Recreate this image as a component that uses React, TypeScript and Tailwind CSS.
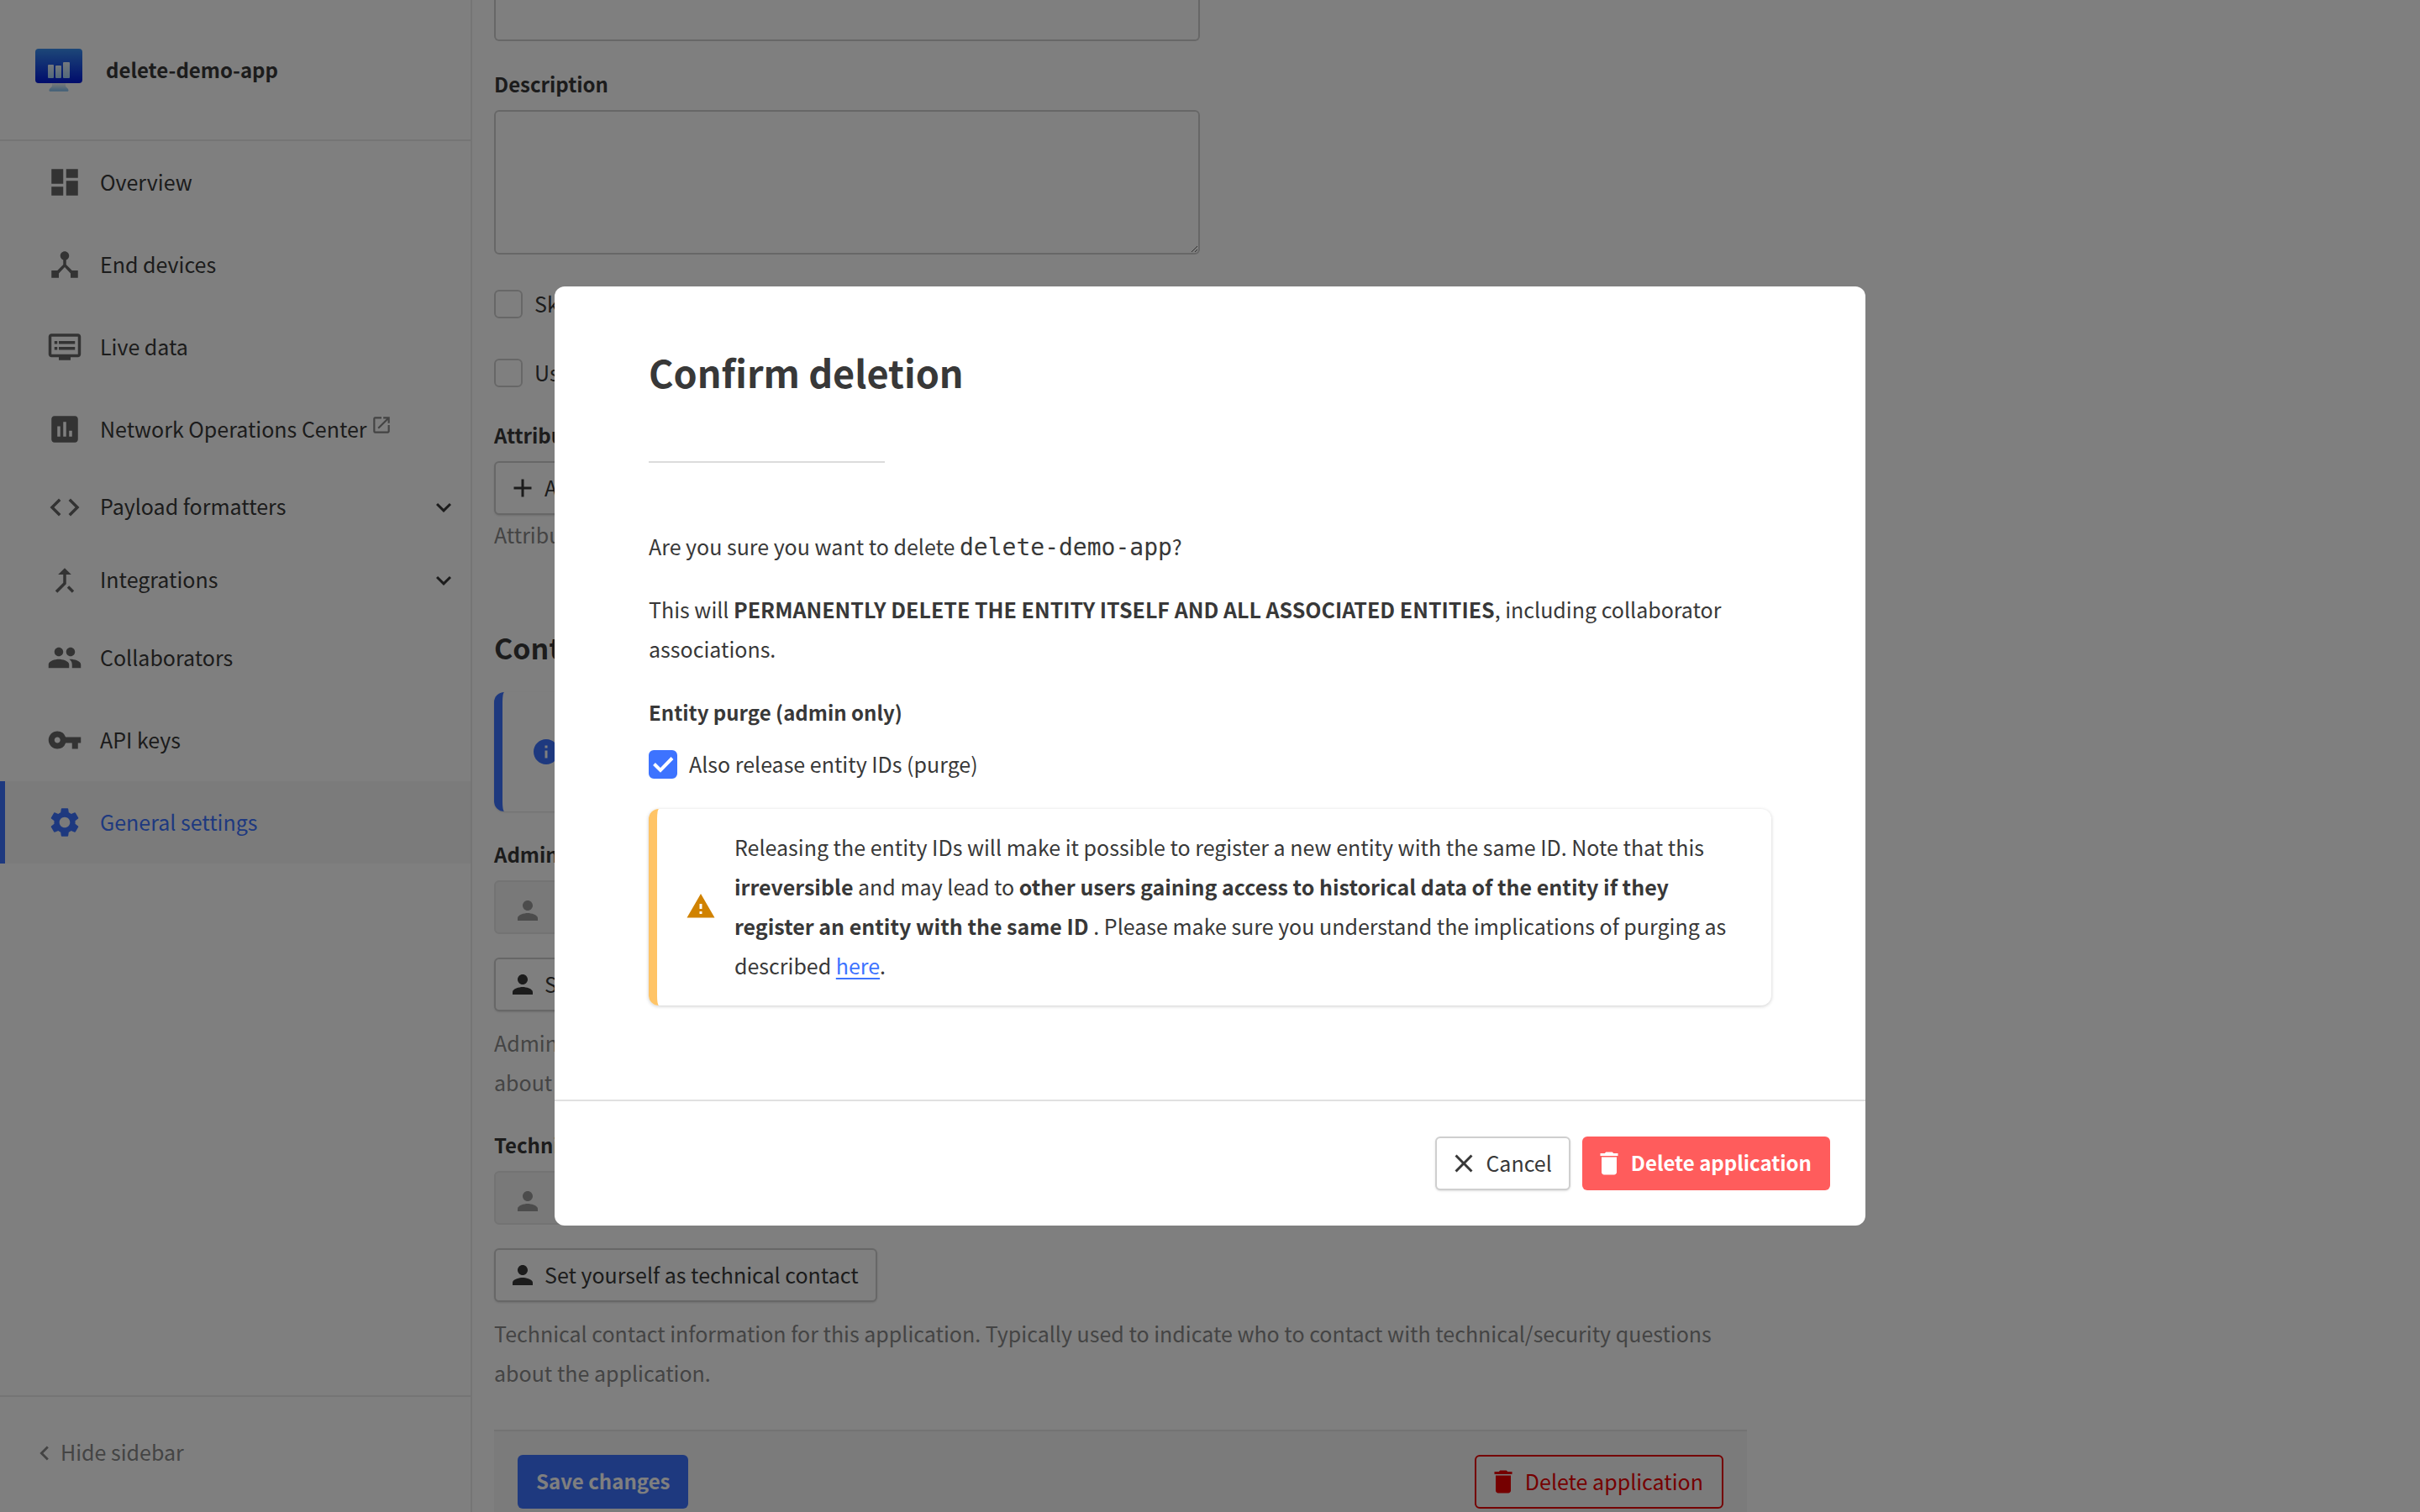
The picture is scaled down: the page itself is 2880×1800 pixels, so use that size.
import { useState, type ReactNode } from 'react'
import {
  MdAdd,
  MdCallMerge,
  MdClose,
  MdCode,
  MdDashboard,
  MdDelete,
  MdDeviceHub,
  MdDvr,
  MdExpandMore,
  MdInfo,
  MdInsertChart,
  MdKeyboardArrowLeft,
  MdOpenInNew,
  MdPeople,
  MdPerson,
  MdSettings,
  MdVpnKey,
  MdWarning,
} from 'react-icons/md'

function AppLogo() {
  return (
    <svg viewBox="0 0 56 52" className="h-[52px] w-14 shrink-0" aria-hidden="true">
      <defs>
        <linearGradient id="screen" x1="0" y1="0" x2="0" y2="1">
          <stop offset="0" stopColor="#3a8ef0" />
          <stop offset="1" stopColor="#0018d8" />
        </linearGradient>
        <linearGradient id="bars" x1="0" y1="0" x2="0" y2="1">
          <stop offset="0" stopColor="#eaf2fa" />
          <stop offset="1" stopColor="#a6d2f6" />
        </linearGradient>
        <linearGradient id="stand" x1="0" y1="0" x2="0" y2="1">
          <stop offset="0" stopColor="#f4f4f4" />
          <stop offset="1" stopColor="#7cbcf0" />
        </linearGradient>
      </defs>
      <path d="M20 42h16v3c0 2 3.500 3 3.500 5.500c0 .8-.5 1.300-1.300 1.300H17.800c-.8 0-1.300-.5-1.300-1.300C16.500 48 20 47 20 45z" fill="url(#stand)" />
      <rect x="0" y="1" width="56" height="41" rx="4" fill="url(#screen)" />
      <rect x="15" y="20" width="7" height="16" rx="1" fill="url(#bars)" />
      <rect x="24" y="21" width="7" height="15" rx="1" fill="url(#bars)" />
      <rect x="33" y="17" width="8" height="19" rx="1" fill="url(#bars)" />
    </svg>
  )
}

function NavLink({ icon, children, active, external }: { icon: ReactNode; children: ReactNode; active?: boolean; external?: boolean }) {
  return (
    <a
      href="#"
      aria-current={active ? 'page' : undefined}
      className={
        active
          ? 'flex h-[98px] items-center gap-[21px] border-l-[6px] border-[#3d73ff] bg-[#f7f7f7] pl-[50px] text-[#3d73ff]'
          : 'flex h-[98px] items-center gap-[21px] pl-14'
      }
    >
      <span className={active ? 'text-[42px]' : 'text-[42px] text-[#666]'}>{icon}</span>
      <span className="flex items-start gap-1 pb-0.5">
        {children}
        {external && <MdOpenInNew className="mt-1.5 text-[26px] text-[#888]" />}
      </span>
    </a>
  )
}

function NavGroup({ icon, children }: { icon: ReactNode; children: ReactNode }) {
  return (
    <button type="button" className="flex h-[87px] w-full items-center gap-[21px] pr-[14px] pl-14">
      <span className="text-[42px] text-[#666]">{icon}</span>
      <span className="pb-0.5">{children}</span>
      <MdExpandMore className="ml-auto text-[36px]" />
    </button>
  )
}

const plainButton =
  'flex h-16 w-fit items-center gap-2 rounded-md border-2 border-[#cfcfcf] bg-white pr-5 pl-[14px] shadow-sm'

function Check({ children }: { children: ReactNode }) {
  return (
    <label className="flex h-[34px] items-center gap-[14px]">
      <input type="checkbox" className="size-[34px] shrink-0 appearance-none rounded-md border-2 border-[#cfcfcf]" />
      <span className="pb-0.5">{children}</span>
    </label>
  )
}

function Contact({ id, label, action, help }: { id: string; label: string; action: string; help: string }) {
  return (
    <section className="flex flex-col">
      <label htmlFor={id} className="text-2xl leading-[46px] font-semibold">{label}</label>
      <div className="mt-2 flex h-16 w-full max-w-[840px] items-center rounded-md border-2 border-[#e6e6e6] bg-[#f2f2f2] pl-5">
        <MdPerson className="mt-2 shrink-0 text-[36px] text-[#999]" />
        <input id={id} disabled className="min-w-0 flex-1 px-3" />
      </div>
      <button type="button" className={plainButton + ' mt-7'}>
        <MdPerson className="text-[36px]" />
        <span className="pb-0.5">{action}</span>
      </button>
      <p className="mt-3.5 text-[#888]">{help}</p>
    </section>
  )
}

function Page() {
  return (
    <div className="flex h-screen overflow-hidden">
      <nav className="flex w-[562px] shrink-0 flex-col border-r-2 border-[#ebebeb]">
        <header className="flex h-[168px] items-center gap-7 border-b-2 border-[#ebebeb] pl-[42px]">
          <AppLogo />
          <span className="pb-0.5 text-2xl leading-[47px] font-semibold">delete-demo-app</span>
        </header>
        <NavLink icon={<MdDashboard />}>Overview</NavLink>
        <NavLink icon={<MdDeviceHub />}>End devices</NavLink>
        <NavLink icon={<MdDvr />}>Live data</NavLink>
        <NavLink icon={<MdInsertChart />} external>Network Operations Center</NavLink>
        <NavGroup icon={<MdCode />}>Payload formatters</NavGroup>
        <NavGroup icon={<MdCallMerge />}>Integrations</NavGroup>
        <NavLink icon={<MdPeople />}>Collaborators</NavLink>
        <NavLink icon={<MdVpnKey />}>API keys</NavLink>
        <NavLink icon={<MdSettings />} active>General settings</NavLink>
        <button type="button" className="mt-auto flex h-[139px] items-center gap-0.5 border-t-2 border-[#ebebeb] pb-1 pl-9 text-[#888]">
          <MdKeyboardArrowLeft className="text-[34px]" />
          <span className="pb-0.5">Hide sidebar</span>
        </button>
      </nav>

      <main className="flex min-w-0 flex-1 flex-col pl-[26px]">
        <form className="flex w-full max-w-[1491px] flex-col">
          <input aria-label="Name" className="h-[49px] w-full max-w-[840px] rounded-b-md border-2 border-t-0 border-[#cfcfcf] px-4" />
          <label htmlFor="description" className="mt-7 text-2xl leading-[46px] font-semibold">Description</label>
          <textarea id="description" className="mt-2 h-[172px] w-full max-w-[840px] resize rounded-md border-2 border-[#cfcfcf]" />
          <div className="mt-[42px] flex flex-col gap-12">
            <Check>Skip payload encryption and decryption</Check>
            <Check>Use end device claiming defaults</Check>
          </div>
          <span className="mt-[34px] text-2xl leading-[46px] font-semibold">Attributes</span>
          <button type="button" className={plainButton + ' mt-2'}>
            <MdAdd className="text-[36px]" />
            <span className="pb-0.5">Add attributes</span>
          </button>
          <p className="text-[#888]">Attributes can be used to set arbitrary information about the entity</p>
          <h2 className="mt-[86px] text-[34px] leading-[50px] font-semibold">Contact information</h2>
          <div className="mt-7 flex h-[142px] items-center gap-6 rounded-xl border-l-[10px] border-[#3d73ff] pl-[34px] shadow-sm">
            <MdInfo className="text-[36px] text-[#3d73ff]" />
            Contact information can be set for this application.
          </div>
          <div className="mt-7 flex flex-col gap-7">
            <Contact
              id="admin-contact"
              label="Administrative contact"
              action="Set yourself as administrative contact"
              help="Administrative contact information for this application. Typically used to indicate who to contact with administrative questions about the application."
            />
            <Contact
              id="technical-contact"
              label="Technical contact"
              action="Set yourself as technical contact"
              help="Technical contact information for this application. Typically used to indicate who to contact with technical/security questions about the application."
            />
          </div>
          <div className="mt-11 flex justify-between border-t-2 border-[#e6e6e6] bg-[#f7f7f7] p-7">
            <button type="button" className="h-16 rounded-md bg-[#3d73ff] px-[22px] pb-0.5 text-2xl font-semibold text-white">
              Save changes
            </button>
            <button type="button" className="flex h-16 items-center gap-2 rounded-md border-2 border-[#eb0000] pr-[22px] pl-[14px] text-[#eb0000]">
              <MdDelete className="text-[36px]" />
              <span className="pb-0.5">Delete application</span>
            </button>
          </div>
        </form>
      </main>
    </div>
  )
}

function DeleteDialog() {
  const [purge, setPurge] = useState(true)
  return (
    <div className="fixed inset-0 flex items-center justify-center bg-black/50">
      <div role="dialog" aria-modal="true" aria-labelledby="dialog-title" className="w-full max-w-[1560px] rounded-xl bg-white">
        <div className="flex flex-col px-28 pt-[67px] pb-28">
          <h1 id="dialog-title" className="text-[45px] leading-[70px] font-semibold">Confirm deletion</h1>
          <hr className="mt-[71px] w-[281px] border-t-2 border-[#dcdcdc]" />
          <p className="mt-[76px]">
            Are you sure you want to delete <code className="font-['DejaVu_Sans_Mono',monospace] text-[28px] leading-none">delete-demo-app</code>?
          </p>
          <p className="mt-7">
            This will <strong>PERMANENTLY DELETE THE ENTITY ITSELF AND ALL ASSOCIATED ENTITIES</strong>, including collaborator
            associations.
          </p>
          <h2 className="mt-7 text-2xl leading-[47px] font-semibold">Entity purge (admin only)</h2>
          <label className="mt-[22px] flex h-[34px] items-center gap-[14px]">
            <span className="relative size-[34px]">
              <input
                type="checkbox"
                checked={purge}
                onChange={e => setPurge(e.target.checked)}
                className="block size-[34px] appearance-none rounded-md border-2 border-[#cfcfcf] checked:border-[#3d73ff] checked:bg-[#3d73ff]"
              />
              {purge && (
                <svg viewBox="0 0 34 34" className="pointer-events-none absolute inset-0" aria-hidden="true">
                  <path d="M6.500 16.500l7.500 7.500L28 9.500" fill="none" stroke="#fff" strokeWidth="4" />
                </svg>
              )}
            </span>
            <span className="pb-0.5">Also release entity IDs (purge)</span>
          </label>
          <div className="mt-9 flex items-center gap-[22px] rounded-xl border-l-[10px] border-[#ffc466] pt-[22px] pr-11 pb-6 pl-[34px] shadow-[0_1px_4px_rgba(0,0,0,0.2)]">
            <MdWarning className="shrink-0 text-[36px] text-[#d08200]" />
            <p>
              Releasing the entity IDs will make it possible to register a new entity with the same ID. Note that this{' '}
              <strong>irreversible</strong> and may lead to{' '}
              <strong>other users gaining access to historical data of the entity if they register an entity with the same ID</strong>{' '}
              . Please make sure you understand the implications of purging as described{' '}
              <a href="#" className="text-[#3d73ff] underline decoration-2 underline-offset-4">here</a>.
            </p>
          </div>
        </div>
        <div className="flex justify-end gap-[14px] border-t-2 border-[#e0e0e0] p-[42px]">
          <button type="button" className={plainButton}>
            <MdClose className="text-[36px]" />
            <span className="pb-0.5">Cancel</span>
          </button>
          <button type="button" className="flex h-16 items-center gap-2 rounded-md bg-[#ff5c5c] pr-[22px] pl-[14px] font-semibold text-white">
            <MdDelete className="text-[36px]" />
            <span className="pb-0.5 text-2xl">Delete application</span>
          </button>
        </div>
      </div>
    </div>
  )
}

export default function App() {
  return (
    <div className="bg-white font-['Noto_Sans_CJK_SC',sans-serif] text-[25px] leading-[47px] text-[#383838]">
      <Page />
      <DeleteDialog />
    </div>
  )
}
